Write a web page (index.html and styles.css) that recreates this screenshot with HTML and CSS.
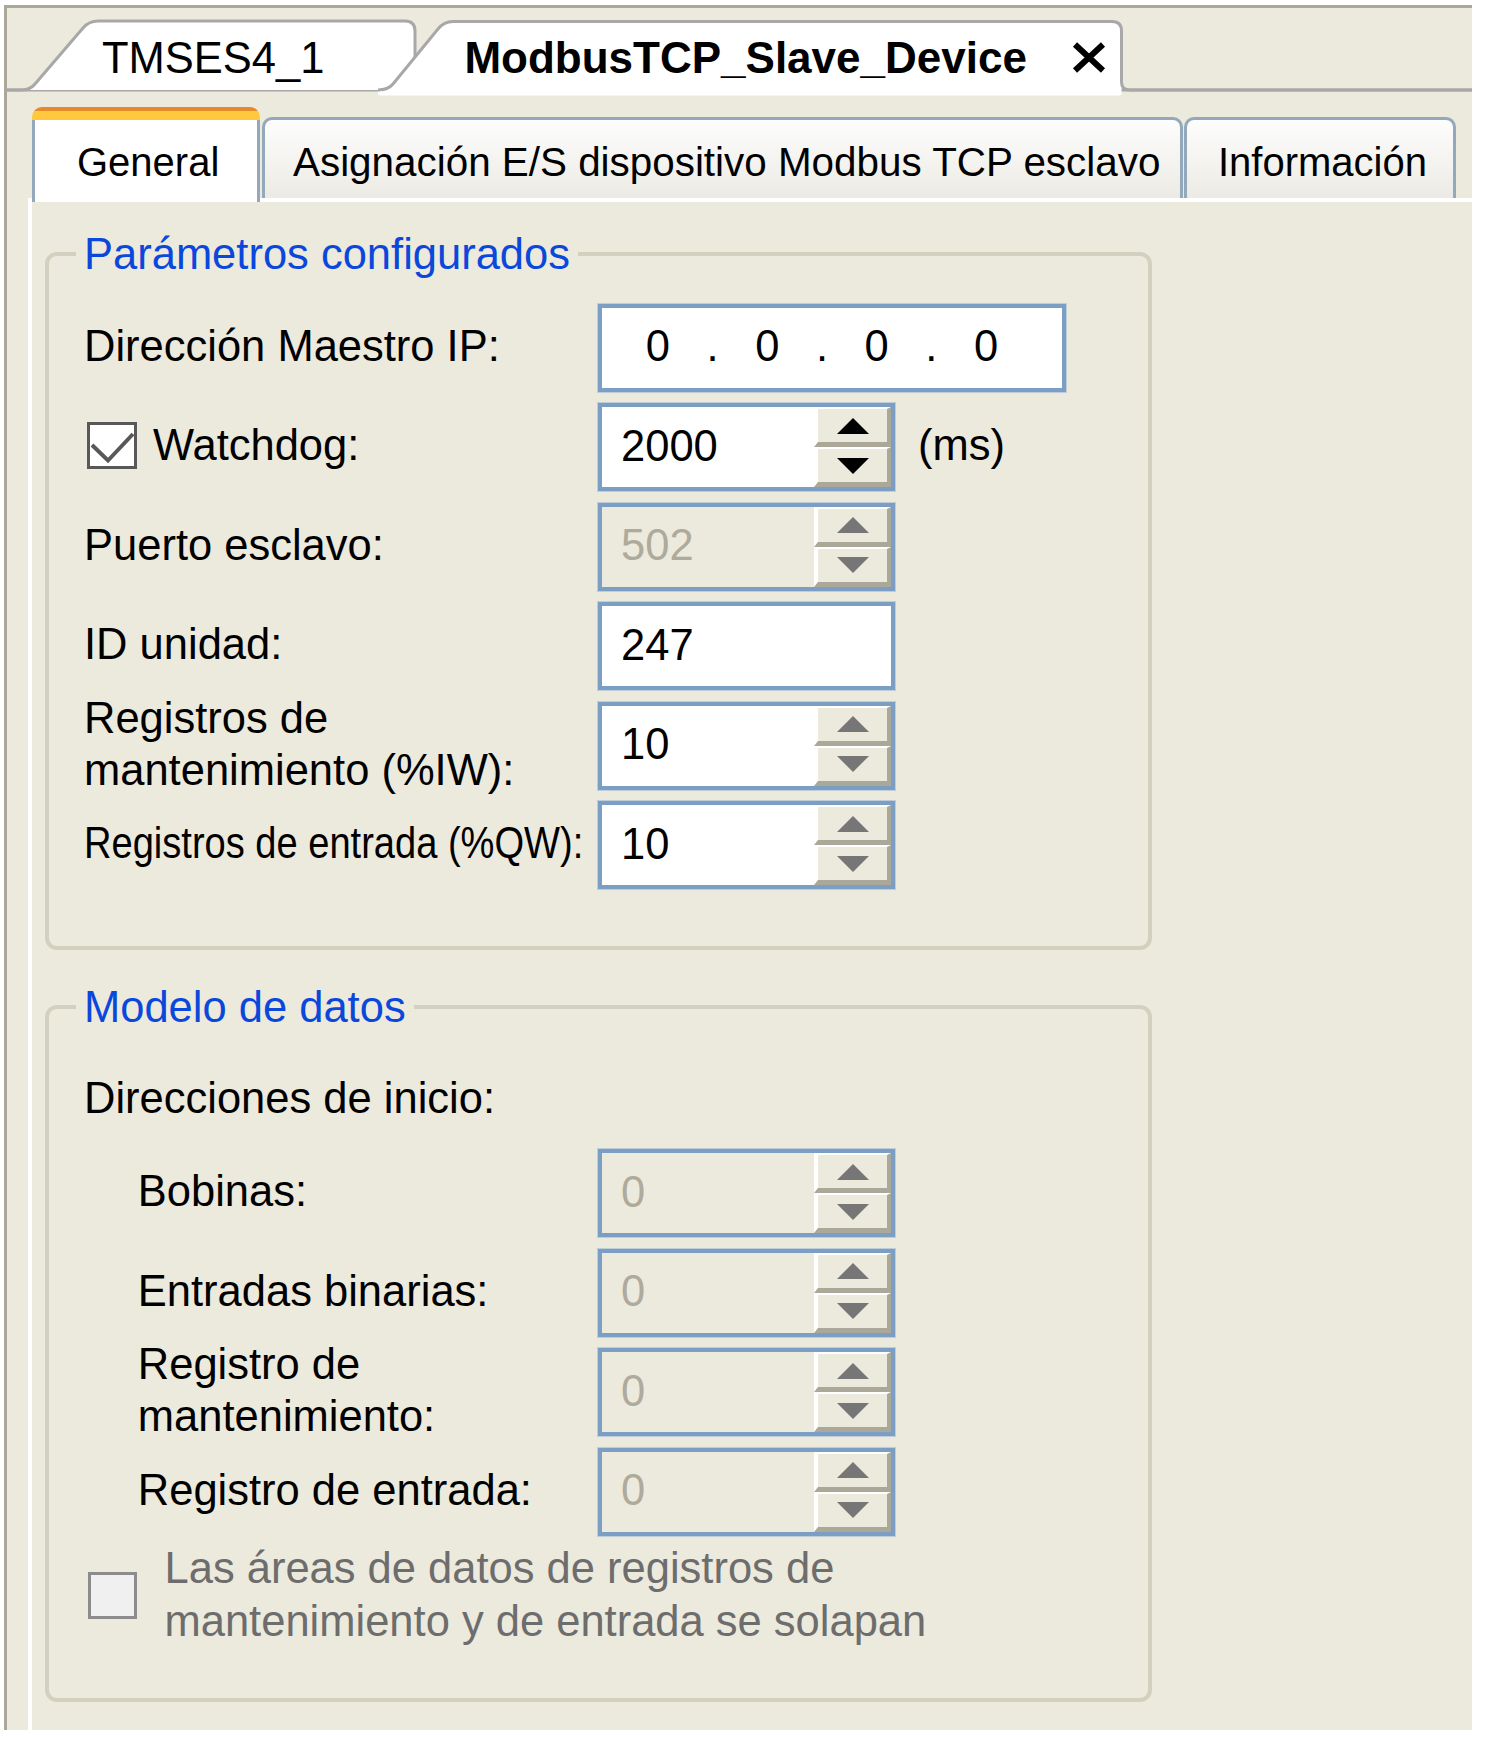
FILE: index.html
```html
<!DOCTYPE html>
<html lang="es">
<head>
<meta charset="utf-8">
<title>ModbusTCP_Slave_Device</title>
<link rel="stylesheet" href="styles.css">
</head>
<body>
<div class="window">
  <div class="doctabs">
    <svg class="doc-shapes" viewBox="7 8 1465 99" width="1465" height="99" aria-hidden="true">
      <path d="M7 90 H1472" stroke="#a8a8a8" stroke-width="3" fill="none"/>
      <path d="M7 90 H22 Q30 90 35 84 L83 28 Q89 21 98 21 H405 Q415 21 415 31 V90 Z" fill="#fff"/>
      <path d="M7 90 H22 Q30 90 35 84 L83 28 Q89 21 98 21 H405 Q415 21 415 31 V90" fill="none" stroke="#a8a8a8" stroke-width="3"/>
      <path d="M378 90 Q388 90 393 84 L438 29 Q444 21.5 453 21.5 H1112 Q1121.5 21.5 1121.5 31 V95 H378 Z" fill="#fff"/>
      <path d="M378 90 Q388 90 393 84 L438 29 Q444 21.5 453 21.5 H1112 Q1121.5 21.5 1121.5 31 V82 Q1121.5 90 1130 90 H1472" fill="none" stroke="#a8a8a8" stroke-width="3"/>
      <rect x="380" y="91.5" width="740" height="4" fill="#fff"/>
    </svg>
    <span class="dt-label dt-first">TMSES4_1</span>
    <span class="dt-label dt-active">ModbusTCP_Slave_Device</span>
    <svg class="close-x" viewBox="0 0 34 31" width="34" height="31" aria-hidden="true">
      <path d="M3 2.5 L31 28.5 M31 2.5 L3 28.5" stroke="#000" stroke-width="6" fill="none"/>
    </svg>
  </div>

  <div class="proptabs">
    <div class="ptab ptab-sel">General</div>
    <div class="ptab ptab-io">Asignación E/S dispositivo Modbus TCP esclavo</div>
    <div class="ptab ptab-info">Información</div>
  </div>

  <div class="panel">
    <fieldset class="group group-params">
      <legend>Parámetros configurados</legend>
      <div class="form">
        <div class="lbl">Dirección Maestro IP:</div>
        <div class="cell">
          <div class="field field-ip">
            <div class="ip">
              <span class="ipc">0</span><span class="ipc">.</span><span class="ipc">0</span><span class="ipc">.</span><span class="ipc">0</span><span class="ipc">.</span><span class="ipc">0</span>
            </div>
          </div>
        </div>

        <div class="lbl lbl-check">
          <svg class="chk" viewBox="0 0 50 47" width="50" height="47" aria-hidden="true">
            <rect x="1.5" y="1.5" width="47" height="44" fill="#fff" stroke="#585858" stroke-width="3"/>
            <polyline points="5,23 21,38.5 46,12" fill="none" stroke="#585858" stroke-width="4"/>
          </svg>
          <span>Watchdog:</span>
        </div>
        <div class="cell">
          <div class="field">
            <div class="val">2000</div>
            <div class="spin spin-dark"><div class="sbtn"><span class="tri-up"></span></div><div class="sbtn"><span class="tri-down"></span></div></div>
          </div>
          <span class="unit">(ms)</span>
        </div>

        <div class="lbl">Puerto esclavo:</div>
        <div class="cell">
          <div class="field field-dis">
            <div class="val">502</div>
            <div class="spin"><div class="sbtn"><span class="tri-up"></span></div><div class="sbtn"><span class="tri-down"></span></div></div>
          </div>
        </div>

        <div class="lbl">ID unidad:</div>
        <div class="cell">
          <div class="field">
            <div class="val">247</div>
          </div>
        </div>

        <div class="lbl">Registros de<br>mantenimiento (%IW):</div>
        <div class="cell">
          <div class="field">
            <div class="val">10</div>
            <div class="spin"><div class="sbtn"><span class="tri-up"></span></div><div class="sbtn"><span class="tri-down"></span></div></div>
          </div>
        </div>

        <div class="lbl"><span class="narrow">Registros de entrada (%QW):</span></div>
        <div class="cell">
          <div class="field">
            <div class="val">10</div>
            <div class="spin"><div class="sbtn"><span class="tri-up"></span></div><div class="sbtn"><span class="tri-down"></span></div></div>
          </div>
        </div>
      </div>
    </fieldset>

    <fieldset class="group group-model">
      <legend>Modelo de datos</legend>
      <div class="dir">Direcciones de inicio:</div>
      <div class="form form-model">
        <div class="lbl lbl-ind">Bobinas:</div>
        <div class="cell">
          <div class="field field-dis">
            <div class="val">0</div>
            <div class="spin"><div class="sbtn"><span class="tri-up"></span></div><div class="sbtn"><span class="tri-down"></span></div></div>
          </div>
        </div>

        <div class="lbl lbl-ind">Entradas binarias:</div>
        <div class="cell">
          <div class="field field-dis">
            <div class="val">0</div>
            <div class="spin"><div class="sbtn"><span class="tri-up"></span></div><div class="sbtn"><span class="tri-down"></span></div></div>
          </div>
        </div>

        <div class="lbl lbl-ind">Registro de<br>mantenimiento:</div>
        <div class="cell">
          <div class="field field-dis">
            <div class="val">0</div>
            <div class="spin"><div class="sbtn"><span class="tri-up"></span></div><div class="sbtn"><span class="tri-down"></span></div></div>
          </div>
        </div>

        <div class="lbl lbl-ind">Registro de entrada:</div>
        <div class="cell">
          <div class="field field-dis">
            <div class="val">0</div>
            <div class="spin"><div class="sbtn"><span class="tri-up"></span></div><div class="sbtn"><span class="tri-down"></span></div></div>
          </div>
        </div>
      </div>

      <div class="chkrow">
        <svg class="chk-dis" viewBox="0 0 49 47" width="49" height="47" aria-hidden="true">
          <rect x="1.5" y="1.5" width="46" height="44" fill="#f0f0f0" stroke="#8c8c8c" stroke-width="3"/>
        </svg>
        <span class="chk-text">Las áreas de datos de registros de<br>mantenimiento y de entrada se solapan</span>
      </div>
    </fieldset>
  </div>
</div>
</body>
</html>
```

FILE: styles.css
```css
* {
  box-sizing: border-box;
}

html,
body {
  margin: 0;
  padding: 0;
  background: #ffffff;
}

body {
  width: 1486px;
  height: 1739px;
  overflow: hidden;
  font-family: "Liberation Sans", Arial, sans-serif;
  font-size: 43.5px;
  color: #000;
}

.window {
  margin: 5px 0 0 4px;
  width: 1468px;
  height: 1725px;
  border-top: 3px solid #aca899;
  border-left: 3px solid #aca899;
  background: #ece9dd;
  display: flex;
  flex-direction: column;
}

/* document tabs */
.doctabs {
  position: relative;
  height: 99px;
  flex: none;
  display: flex;
  align-items: flex-start;
  padding-top: 24px;
}

.doc-shapes {
  position: absolute;
  left: 0;
  top: 0;
}

.dt-label {
  position: relative;
  line-height: 52px;
  height: 52px;
  white-space: nowrap;
}

.dt-first {
  margin-left: 95px;
}

.dt-active {
  margin-left: 140px;
  font-weight: bold;
  font-size: 44px;
}

.close-x {
  position: relative;
  margin-left: 45px;
  margin-top: 10px;
  flex: none;
}

/* property tabs */
.proptabs {
  position: relative;
  z-index: 1;
  height: 91px;
  flex: none;
  display: flex;
  align-items: flex-start;
  padding-left: 25px;
}

.ptab {
  font-size: 40px;
  line-height: 46px;
  white-space: nowrap;
  flex: none;
}

.ptab-sel {
  width: 228px;
  height: 95px;
  padding-top: 32px;
  padding-left: 45px;
  border-radius: 10px 10px 0 0;
  background:
    linear-gradient(#e58a2b, #e58a2b) 0 0 / 100% 4px no-repeat,
    linear-gradient(#ffc83d, #ffc83d) 0 4px / 100% 9px no-repeat,
    linear-gradient(#93a8ba, #93a8ba) 0 13px / 3px 100% no-repeat,
    linear-gradient(#93a8ba, #93a8ba) 100% 13px / 3px 100% no-repeat,
    #ffffff;
}

.ptab-io,
.ptab-info {
  margin-top: 10px;
  height: 81px;
  padding-top: 19px;
  border: 3px solid #93a8ba;
  border-bottom: none;
  border-radius: 10px 10px 0 0;
  background: linear-gradient(#fdfdfd, #f3f2ee 60%, #ebeae4);
}

.ptab-io {
  margin-left: 2px;
  width: 921px;
  padding-left: 28px;
  font-size: 40.4px;
}

.ptab-info {
  margin-left: 1px;
  width: 272px;
  padding-left: 31px;
}

/* panel */
.panel {
  flex: 1;
  margin-left: 21px;
  border-top: 4px solid #ffffff;
  border-left: 4px solid #ffffff;
}

.group {
  margin: 0 0 0 13px;
  width: 1107px;
  min-width: 0;
  border: 4px solid #d3d0bf;
  border-radius: 12px;
  padding: 0 0 0 35px;
}

.group legend {
  padding: 0 8px;
  margin-left: -8px;
  line-height: 52px;
  color: #0a48dc;
  white-space: nowrap;
}

.group-params {
  margin-top: 25.8px;
  padding-top: 23.2px;
  padding-bottom: 56px;
}

.group-model {
  margin-top: 30.2px;
  padding-bottom: 48.7px;
}

.form {
  display: grid;
  grid-template-columns: 513px auto;
  grid-auto-rows: 90px;
  row-gap: 9.5px;
  align-items: center;
}

.form-model {
  margin-top: 24.1px;
}

.lbl {
  line-height: 52px;
  padding-bottom: 4px;
  white-space: nowrap;
}

.lbl-ind {
  padding-left: 53.8px;
}

.lbl-check {
  display: flex;
  align-items: center;
}

.chk {
  margin-left: 3px;
  margin-right: 16px;
  flex: none;
}

.narrow {
  display: inline-block;
  transform: scaleX(0.875);
  transform-origin: left center;
}

.dir {
  margin-top: 39.5px;
  line-height: 52px;
}

.cell {
  display: flex;
  align-items: center;
}

.field {
  width: 297px;
  height: 88px;
  margin: 1px;
  border: 4px solid #7b9fc4;
  box-shadow: 0 0 0 1px #bfcdda;
  background: #ffffff;
  display: flex;
  flex: none;
}

.field-ip {
  width: 468px;
}

.field-dis {
  background: #ece9dd;
  color: #aeaa9c;
}

.val {
  flex: 1;
  display: flex;
  align-items: center;
  padding-left: 19px;
  padding-bottom: 3.5px;
  line-height: 52px;
}

.ip {
  flex: 1;
  display: flex;
  align-items: center;
  padding-left: 28.6px;
  padding-bottom: 3px;
  line-height: 52px;
}

.ipc {
  width: 54.7px;
  text-align: center;
  flex: none;
}

.unit {
  margin-left: 22px;
  padding-bottom: 4px;
  line-height: 52px;
}

.spin {
  width: 77px;
  display: flex;
  flex-direction: column;
  flex: none;
}

.sbtn {
  flex: 1;
  background: #ece9dd;
  border-style: solid;
  border-width: 2px 4px 5px 4px;
  border-color: #ffffff #aca899 #aca899 #ffffff;
  display: flex;
  align-items: center;
  justify-content: center;
}

.tri-up {
  width: 0;
  height: 0;
  border-left: 16px solid transparent;
  border-right: 16px solid transparent;
  border-bottom: 16px solid #767676;
}

.tri-down {
  width: 0;
  height: 0;
  border-left: 16px solid transparent;
  border-right: 16px solid transparent;
  border-top: 16px solid #767676;
}

.spin-dark .tri-up {
  border-bottom-color: #000;
}

.spin-dark .tri-down {
  border-top-color: #000;
}

.chkrow {
  margin-top: 5.3px;
  display: flex;
  align-items: center;
}

.chk-dis {
  margin-left: 4px;
  flex: none;
}

.chk-text {
  margin-left: 27.5px;
  line-height: 53.4px;
  color: #6d6d6d;
  white-space: nowrap;
}
```
